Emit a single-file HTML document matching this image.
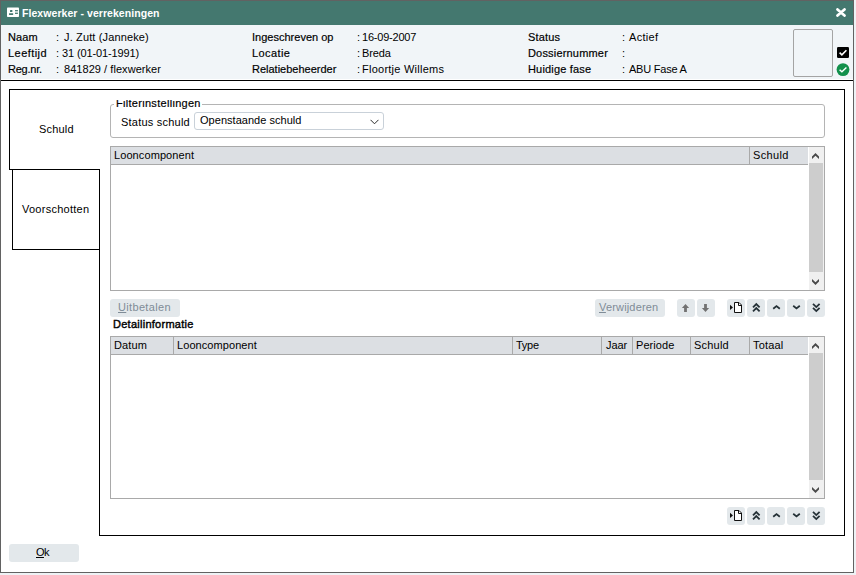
<!DOCTYPE html>
<html><head><meta charset="utf-8">
<style>
*{margin:0;padding:0;box-sizing:border-box}
html,body{width:856px;height:575px;overflow:hidden;background:#eef2f5}
body{position:relative;font-family:"Liberation Sans",sans-serif;font-size:11px;color:#000}
.a{position:absolute;white-space:nowrap;line-height:13px}
#win{position:absolute;left:0;top:0;width:854px;height:573px;border:1px solid #626262;background:#fff}
#title{position:absolute;left:1px;top:1px;width:852px;height:24px;background:#44786f}
#hdr{position:absolute;left:1px;top:25px;width:852px;height:54px;background:#f1f5f8}
#hline{position:absolute;left:1px;top:80px;width:852px;height:1px;background:#000}
.lbl{color:#000;-webkit-text-stroke:0.18px #000}
.box{position:absolute;border:1px solid #000}
.grid{position:absolute;border:1px solid #a9a9a9;background:#fff}
.gh{position:absolute;left:0;top:0;height:18px;width:697px;background:#dcdfe3;border-bottom:1px solid #a9a9a9}
.sep{position:absolute;top:0;width:1px;height:17px;background:#a9a9a9}
.sb{position:absolute;top:0;width:15px;background:#f0f0f0}
.thumb{position:absolute;left:0;width:14px;background:#cdcdcd}
.btn{position:absolute;height:18px;background:#e3e8eb;border-radius:3px}
.ib{position:absolute;width:18px;height:18px;background:#e3e8eb;border-radius:3px}
.ib svg{position:absolute;left:0;top:0}
</style></head><body>
<div id="win"></div>
<div id="title"></div>
<svg class="a" style="left:7px;top:7px" width="12" height="11" viewBox="0 0 12 11"><rect x="0" y="0.6" width="12" height="9.5" rx="0.8" fill="#fff"/><rect x="3" y="3" width="2.4" height="2" rx="0.5" fill="#44786f"/><rect x="2" y="6.2" width="4.2" height="1.7" rx="0.4" fill="#44786f"/><rect x="8" y="3" width="2.9" height="3.9" fill="#c5d6d2"/><rect x="8" y="3" width="2.9" height="0.9" fill="#44786f"/><rect x="8" y="5.9" width="2.9" height="1" fill="#44786f"/></svg>
<div class="a" style="left:22px;top:7px;color:#fff;font-weight:bold;font-size:10.5px;letter-spacing:0.06px">Flexwerker - verrekeningen</div>
<svg class="a" style="left:836px;top:8px" width="10" height="9" viewBox="0 0 10 9"><path d="M1.5 1.4 L8.5 7.6 M8.5 1.4 L1.5 7.6" stroke="#fff" stroke-width="2.7" stroke-linecap="round"/></svg>
<div id="hdr"></div>
<div id="hline"></div>

<div class="a lbl" style="left:8px;top:31px;letter-spacing:0.12px">Naam</div>
<div class="a lbl" style="left:8px;top:47px;letter-spacing:0.45px">Leeftijd</div>
<div class="a lbl" style="left:8px;top:63px;letter-spacing:-0.24px">Reg.nr.</div>
<div class="a" style="left:56px;top:31px">:</div>
<div class="a" style="left:56px;top:47px">:</div>
<div class="a" style="left:56px;top:63px">:</div>
<div class="a" style="left:64px;top:31px;letter-spacing:0.14px">J. Zutt (Janneke)</div>
<div class="a" style="left:62px;top:47px;letter-spacing:-0.13px">31 (01-01-1991)</div>
<div class="a" style="left:64px;top:63px;letter-spacing:0.05px">841829 / flexwerker</div>
<div class="a lbl" style="left:252px;top:31px;letter-spacing:0.01px">Ingeschreven op</div>
<div class="a lbl" style="left:252px;top:47px;letter-spacing:0.42px">Locatie</div>
<div class="a lbl" style="left:252px;top:63px;letter-spacing:0.00px">Relatiebeheerder</div>
<div class="a" style="left:357px;top:31px">:</div>
<div class="a" style="left:357px;top:47px">:</div>
<div class="a" style="left:357px;top:63px">:</div>
<div class="a" style="left:362px;top:31px;letter-spacing:-0.21px">16-09-2007</div>
<div class="a" style="left:362px;top:47px;letter-spacing:-0.15px">Breda</div>
<div class="a" style="left:362px;top:63px;letter-spacing:0.25px">Floortje Willems</div>
<div class="a lbl" style="left:528px;top:31px;letter-spacing:0.16px">Status</div>
<div class="a lbl" style="left:528px;top:47px;letter-spacing:0.18px">Dossiernummer</div>
<div class="a lbl" style="left:528px;top:63px;letter-spacing:0.17px">Huidige fase</div>
<div class="a" style="left:622px;top:31px">:</div>
<div class="a" style="left:622px;top:47px">:</div>
<div class="a" style="left:622px;top:63px">:</div>
<div class="a" style="left:629px;top:31px;letter-spacing:0.32px">Actief</div>
<div class="a" style="left:629px;top:63px;letter-spacing:-0.23px">ABU Fase A</div>

<div class="a" style="left:793px;top:29px;width:40px;height:48px;border:1px solid #a4a4a4;border-radius:2px"></div>
<svg class="a" style="left:837px;top:47px" width="12" height="11" viewBox="0 0 12 11"><rect x="0" y="0" width="12" height="11" rx="1.2" fill="#000"/><path d="M2.6 5.6 L4.9 7.8 L9.4 3.2" stroke="#fff" stroke-width="1.6" fill="none"/></svg>
<svg class="a" style="left:836px;top:63px" width="14" height="14" viewBox="0 0 14 14"><circle cx="7" cy="6.6" r="6.4" fill="#12904c"/><path d="M3.6 6.7 L5.9 8.8 L10.4 4.5" stroke="#fff" stroke-width="1.4" fill="none"/></svg>

<!-- tabs / panel -->
<div class="a" style="left:9px;top:89px;width:836px;height:1px;background:#000"></div>
<div class="a" style="left:9px;top:89px;width:1px;height:81px;background:#000"></div>
<div class="a" style="left:9px;top:169px;width:91px;height:1px;background:#000"></div>
<div class="a" style="left:12px;top:169px;width:1px;height:81px;background:#000"></div>
<div class="a" style="left:12px;top:249px;width:88px;height:1px;background:#000"></div>
<div class="a" style="left:99px;top:169px;width:1px;height:367px;background:#000"></div>
<div class="a" style="left:844px;top:89px;width:1px;height:447px;background:#000"></div>
<div class="a" style="left:99px;top:535px;width:746px;height:1px;background:#000"></div>
<div class="a" style="left:39px;top:123px;letter-spacing:0.2px">Schuld</div>
<div class="a" style="left:22px;top:203px;letter-spacing:0.255px">Voorschotten</div>

<!-- fieldset -->
<div class="a" style="left:110px;top:104px;width:715px;height:34px;border:1px solid #b4b4b4;border-radius:3px"></div>
<div class="a" style="left:114px;top:100px;width:88px;height:9px;background:#fff;overflow:hidden"><div class="a lbl" style="left:2px;top:-3px;letter-spacing:0.294px">Filterinstellingen</div></div>
<div class="a" style="left:121px;top:116px;letter-spacing:0.225px">Status schuld</div>
<div class="a" style="left:194px;top:112px;width:190px;height:18px;border:1px solid #c9d1d9;border-radius:3px;background:#fff"></div>
<div class="a" style="left:200px;top:114px;letter-spacing:0.03px">Openstaande schuld</div>
<svg class="a" style="left:370px;top:119px" width="9" height="6" viewBox="0 0 9 6"><path d="M0.5 0.8 L4.5 4.8 L8.5 0.8" stroke="#2a2a2a" stroke-width="1" fill="none"/></svg>

<!-- grid 1 -->
<div class="grid" style="left:110px;top:146px;width:715px;height:145px">
  <div class="gh"></div>
  <div class="sep" style="left:638px"></div>
  <div class="sb" style="left:698px;height:143px">
    <div class="thumb" style="top:16px;height:109px"></div>
  </div>
</div>
<div class="a" style="left:114px;top:149px;letter-spacing:0.09px">Looncomponent</div>
<div class="a" style="left:753px;top:149px;letter-spacing:0.34px">Schuld</div>

<svg class="a" style="left:808px;top:148px" width="16" height="16" viewBox="0 0 16 16"><path d="M7.5 5 L11 8.5 L11 11 L7.5 7.8 L4 11 L4 8.5Z" fill="#4a4a4a"/></svg>
<svg class="a" style="left:808px;top:274px" width="16" height="16" viewBox="0 0 16 16"><path d="M4 5 L7.5 8.2 L11 5 L11 7.5 L7.5 11 L4 7.5Z" fill="#4a4a4a"/></svg>
<!-- buttons row 1 -->
<div class="btn" style="left:110px;top:299px;width:70px"></div>
<div class="a" style="left:118px;top:301px;color:#7f8c97;letter-spacing:0.333px"><u>U</u>itbetalen</div>
<div class="btn" style="left:595px;top:299px;width:70px"></div>
<div class="a" style="left:599px;top:301px;color:#7f8c97;letter-spacing:0.17px"><u>V</u>erwijderen</div>
<div class="ib" style="left:677px;top:299px"><svg width="18" height="18" viewBox="0 0 18 18"><path d="M8.5 5 L12.1 9 L9.9 9 L9.9 13 L7.1 13 L7.1 9 L4.9 9Z" fill="#727272"/></svg></div>
<div class="ib" style="left:697px;top:299px"><svg width="18" height="18" viewBox="0 0 18 18"><path d="M8.5 13 L12.1 9 L9.9 9 L9.9 5 L7.1 5 L7.1 9 L4.9 9Z" fill="#727272"/></svg></div>
<div class="ib" style="left:727px;top:299px"><svg width="18" height="18" viewBox="0 0 18 18"><path d="M3 5.8 L6 8.4 L3 11Z" fill="#111"/><path d="M7.5 3.5 L12 3.5 L14.5 6 L14.5 13.5 L7.5 13.5Z" fill="#fff" stroke="#111" stroke-width="1"/><path d="M11.5 3.5 L11.5 6.5 L14.5 6.5" fill="none" stroke="#111" stroke-width="1"/></svg></div>
<div class="ib" style="left:747px;top:299px"><svg width="18" height="18" viewBox="0 0 18 18"><path d="M6 8.3 L9.3 5 L12.6 8.3 M6 12.3 L9.3 9 L12.6 12.3" stroke="#263238" stroke-width="1.8" fill="none"/></svg></div>
<div class="ib" style="left:767px;top:299px"><svg width="18" height="18" viewBox="0 0 18 18"><path d="M6.2 9.8 L9.5 7.1 L12.8 9.8" stroke="#263238" stroke-width="1.8" fill="none"/></svg></div>
<div class="ib" style="left:787px;top:299px"><svg width="18" height="18" viewBox="0 0 18 18"><path d="M6.2 6.7 L9.5 9.4 L12.8 6.7" stroke="#263238" stroke-width="1.8" fill="none"/></svg></div>
<div class="ib" style="left:807px;top:299px"><svg width="18" height="18" viewBox="0 0 18 18"><path d="M6 4.8 L9.3 8.1 L12.6 4.8 M6 8.8 L9.3 12.1 L12.6 8.8" stroke="#263238" stroke-width="1.8" fill="none"/></svg></div>


<div class="a" style="left:113px;top:318px;-webkit-text-stroke:0.4px #000;letter-spacing:0.26px">Detailinformatie</div>

<!-- grid 2 -->
<div class="grid" style="left:110px;top:336px;width:715px;height:163px">
  <div class="gh"></div>
  <div class="sep" style="left:62px"></div>
  <div class="sep" style="left:401px"></div>
  <div class="sep" style="left:490px"></div>
  <div class="sep" style="left:521px"></div>
  <div class="sep" style="left:579px"></div>
  <div class="sep" style="left:638px"></div>
  <div class="sb" style="left:698px;height:161px">
    <div class="thumb" style="top:16px;height:127px"></div>
  </div>
</div>
<div class="a" style="left:114px;top:339px;letter-spacing:0.125px">Datum</div>
<div class="a" style="left:177px;top:339px;letter-spacing:0.075px">Looncomponent</div>
<div class="a" style="left:516px;top:339px;letter-spacing:-0.267px">Type</div>
<div class="a" style="left:606px;top:339px;letter-spacing:-0.1px">Jaar</div>
<div class="a" style="left:636px;top:339px;letter-spacing:0.067px">Periode</div>
<div class="a" style="left:694px;top:339px;letter-spacing:0.22px">Schuld</div>
<div class="a" style="left:753px;top:339px;letter-spacing:0.18px">Totaal</div>
<div class="ib" style="left:727px;top:507px"><svg width="18" height="18" viewBox="0 0 18 18"><path d="M3 5.8 L6 8.4 L3 11Z" fill="#111"/><path d="M7.5 3.5 L12 3.5 L14.5 6 L14.5 13.5 L7.5 13.5Z" fill="#fff" stroke="#111" stroke-width="1"/><path d="M11.5 3.5 L11.5 6.5 L14.5 6.5" fill="none" stroke="#111" stroke-width="1"/></svg></div>
<div class="ib" style="left:747px;top:507px"><svg width="18" height="18" viewBox="0 0 18 18"><path d="M6 8.3 L9.3 5 L12.6 8.3 M6 12.3 L9.3 9 L12.6 12.3" stroke="#263238" stroke-width="1.8" fill="none"/></svg></div>
<div class="ib" style="left:767px;top:507px"><svg width="18" height="18" viewBox="0 0 18 18"><path d="M6.2 9.8 L9.5 7.1 L12.8 9.8" stroke="#263238" stroke-width="1.8" fill="none"/></svg></div>
<div class="ib" style="left:787px;top:507px"><svg width="18" height="18" viewBox="0 0 18 18"><path d="M6.2 6.7 L9.5 9.4 L12.8 6.7" stroke="#263238" stroke-width="1.8" fill="none"/></svg></div>
<div class="ib" style="left:807px;top:507px"><svg width="18" height="18" viewBox="0 0 18 18"><path d="M6 4.8 L9.3 8.1 L12.6 4.8 M6 8.8 L9.3 12.1 L12.6 8.8" stroke="#263238" stroke-width="1.8" fill="none"/></svg></div>


<svg class="a" style="left:808px;top:338px" width="16" height="16" viewBox="0 0 16 16"><path d="M7.5 5 L11 8.5 L11 11 L7.5 7.8 L4 11 L4 8.5Z" fill="#4a4a4a"/></svg>
<svg class="a" style="left:808px;top:482px" width="16" height="16" viewBox="0 0 16 16"><path d="M4 5 L7.5 8.2 L11 5 L11 7.5 L7.5 11 L4 7.5Z" fill="#4a4a4a"/></svg>
<div class="btn" style="left:9px;top:544px;width:70px"></div>
<div class="a" style="left:36px;top:546px;letter-spacing:-0.6px"><u>O</u>k</div>
</body></html>
